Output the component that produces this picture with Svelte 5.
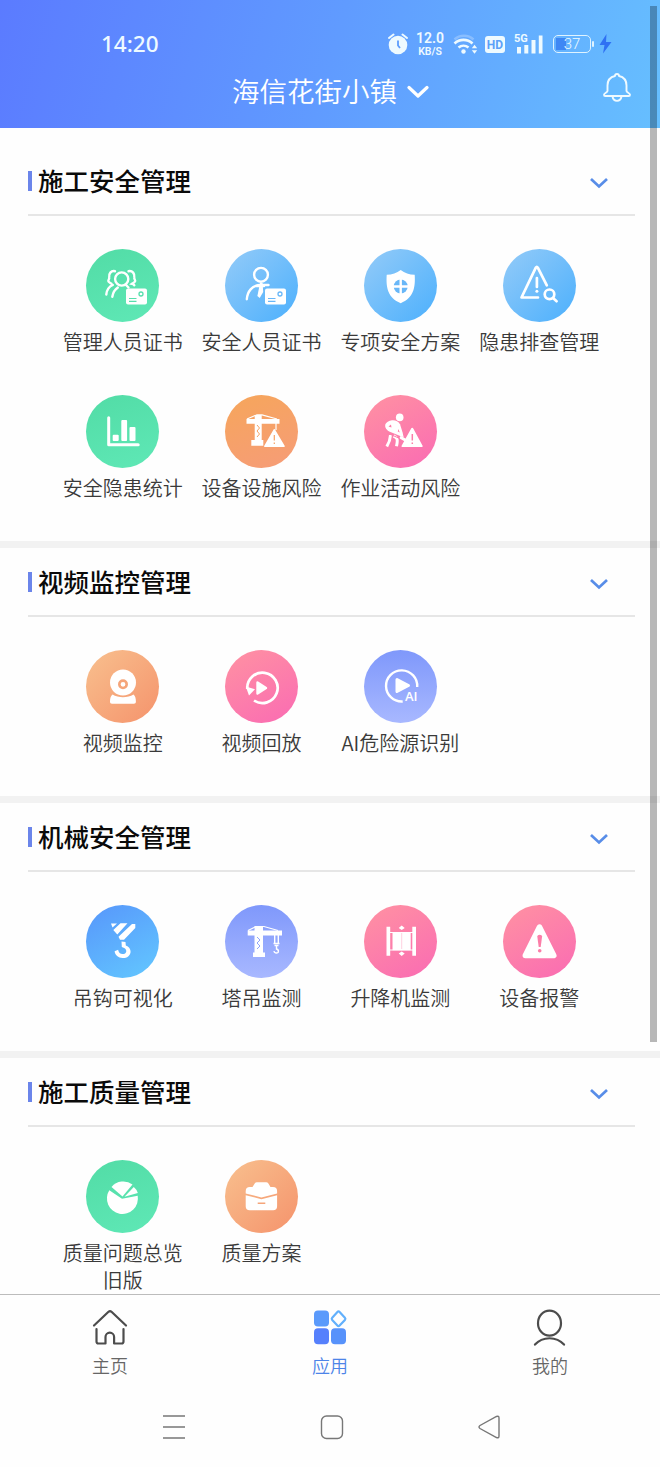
<script>
	const sections = [
		{
			title: "施工安全管理",
			items: [
				{ name: "管理人员证书", icon: "team", tint: "green" },
				{ name: "安全人员证书", icon: "person", tint: "sky" },
				{ name: "专项安全方案", icon: "shield", tint: "sky" },
				{ name: "隐患排查管理", icon: "inspect", tint: "sky" },
				{ name: "安全隐患统计", icon: "chart", tint: "green" },
				{ name: "设备设施风险", icon: "craneRisk", tint: "orange" },
				{ name: "作业活动风险", icon: "worker", tint: "pink" },
			],
		},
		{
			title: "视频监控管理",
			items: [
				{ name: "视频监控", icon: "camera", tint: "peach" },
				{ name: "视频回放", icon: "replay", tint: "pink" },
				{ name: "AI危险源识别", icon: "ai", tint: "violet" },
			],
		},
		{
			title: "机械安全管理",
			items: [
				{ name: "吊钩可视化", icon: "hook", tint: "blue" },
				{ name: "塔吊监测", icon: "crane", tint: "violet" },
				{ name: "升降机监测", icon: "lift", tint: "pink" },
				{ name: "设备报警", icon: "alarm", tint: "pink" },
			],
		},
		{
			title: "施工质量管理",
			items: [
				{ name: "质量问题总览旧版", icon: "pie", tint: "green" },
				{ name: "质量方案", icon: "briefcase", tint: "peach" },
			],
		},
	];

	let closed = $state({});
	let tab = $state("apps");
</script>

{#snippet card()}
	<rect x="40" y="39.5" width="21" height="16" rx="2" fill="#fff" />
	<path d="M43 49.5h7.5M43 52.4h7.5" stroke="currentColor" stroke-width="1.2" />
	<circle cx="55" cy="45" r="2" stroke="currentColor" stroke-width="1.3" />
{/snippet}

{#snippet glyph(icon)}
	{#if icon === "team"}
		<g stroke="#fff" stroke-width="2.4" stroke-linecap="round">
			<circle cx="35.7" cy="30" r="6.6" />
			<path d="M29 22.2c-4-.8-6.500 2.500-5.800 6.500.3 1.500-1.500 2.500-.7 3.800.7 1.200 2 1.600 3 2.300M42.500 22.200c4-.8 6.500 2.500 5.800 6.500-.3 1.500 1.500 2.500.7 3.800-.7 1.200-2 1.600-3 2.300 1 .2 1.800.8 2.300 1.500" />
			<path d="M20.300 45.500c.5-4.500 2.800-8 6.500-9.500M26.300 47.800c.6-4 2.400-7 5.500-9.200M40 36l2.500 2.500" />
		</g>
		{@render card()}
	{:else if icon === "person"}
		<g stroke="#fff" stroke-width="2.4" stroke-linecap="round">
			<circle cx="36" cy="25.8" r="6.9" />
			<path d="M21.800 50.300c.5-8 5.500-13.800 12.700-14.300h9M31 37h8" />
		</g>
		<path d="M35 34h2.600l.6 9-3.500 6-2.300-2z" fill="#fff" />
		{@render card()}
	{:else if icon === "shield"}
		<path d="M36.700 21c4 3.200 8.500 4.600 14 4.800.8 13-1 23-14 28.400-13-5.400-14.800-15.400-14-28.400 5.500-.2 10-1.600 14-4.800z" fill="#fff" />
		<circle cx="36.700" cy="37.500" r="7" fill="currentColor" />
		<path d="M36.700 30v15M29 37.500h15.400" stroke="#fff" stroke-width="2.400" />
	{:else if icon === "inspect"}
		<g stroke="#fff" stroke-width="2.700" stroke-linecap="round" stroke-linejoin="round">
			<path d="M35 48.500H18.500L32.800 18.700q1-1.700 2 0l9 17.600" />
			<path d="M33.900 29v9" />
			<circle cx="46.500" cy="45.300" r="4.800" />
			<path d="M50.300 49.200l3.300 3" />
		</g>
		<circle cx="33.900" cy="42.300" r="1.500" fill="#fff" />
	{:else if icon === "chart"}
		<path d="M22.700 22.700v27h29.500" stroke="#fff" stroke-width="3" stroke-linecap="round" stroke-linejoin="round" />
		<g fill="#fff">
			<rect x="26.700" y="39.800" width="6" height="6.200" rx="1" />
			<rect x="35.300" y="25" width="5.800" height="21" rx="1" />
			<rect x="43.500" y="32" width="6" height="14" rx="1" />
		</g>
	{:else if icon === "craneRisk"}
		<g fill="#fff">
			<path d="M21.500 24h33v4.700h-33zM29.700 20h7v25h-7zM26.300 45h12v5.800h-12z" />
			<path d="M49.300 34q.6 0 1 1L59.800 51q.4 1-1 1H40q-1.400 0-.9-1l9.200-16q.4-1 1-1z" />
		</g>
		<path d="M22 24l10-4.200h5L52 24M51 28v7" stroke="#fff" stroke-width="1.200" />
		<path d="M32 30l2.500 3-2.500 3 2.500 3-2.500 3" stroke="currentColor" stroke-width="1" />
		<path d="M49.300 40v5.500M49.300 47.500v1.500" stroke="currentColor" stroke-width="1.200" />
	{:else if icon === "worker"}
		<circle cx="35.700" cy="22.400" r="3.800" fill="#fff" />
		<path d="M28 25.300c3-.4 6.500 1 8 4l2.500 8 1.200 5-3.500-1.200-11-4.600c-2.500-1.500-4.500-3.500-4-6.500.5-2.500 4-4.300 6.800-4.700z" fill="#fff" />
		<path d="M24.500 31.500l2.500-2 .5 3zM34.300 34l1.500 3.500-2-1z" fill="currentColor" />
		<path d="M36 42l6 3.500M26.500 40c-.3 5-1.500 8-3.700 11.500M29.500 41c4 1.500 4.500 3.500 3 10.300" stroke="#fff" stroke-width="3" />
		<path d="M23 38l13 5.500" stroke="currentColor" stroke-width="1" />
		<path d="M48.200 32.700q.7 0 1.200 1l9.200 17q.6 1.300-1 1.300H38.500q-1.600 0-.9-1.300l9.400-17q.5-1 1.200-1z" fill="#fff" />
		<path d="M48.300 39v6.500M48.300 47.500v1.600" stroke="currentColor" stroke-width="1.500" />
	{:else if icon === "camera"}
		<circle cx="37" cy="32.500" r="13" fill="#fff" />
		<circle cx="37" cy="34.300" r="3.700" stroke="currentColor" stroke-width="2.600" />
		<path d="M26.500 44.500c6 3.600 15 3.600 21 0 1.700 1.200 2.400 4 2.400 7 0 1.500-.7 2.200-2 2.200H26c-1.300 0-2-.7-2-2.200 0-3 .8-5.800 2.500-7z" fill="#fff" />
	{:else if icon === "replay"}
		<path d="M22.300 39A15.200 15.200 0 1 1 29 50.500" stroke="#fff" stroke-width="2.700" />
		<path d="M20.800 36.500l9.200 2.700-6 6.300z" fill="#fff" />
		<path d="M32.500 32.500l8.500 5.500-8.500 5.500z" fill="#fff" stroke="#fff" stroke-width="2.400" stroke-linejoin="round" />
	{:else if icon === "ai"}
		<path d="M53.200 37A15.600 15.600 0 1 0 38.700 51.500" stroke="#fff" stroke-width="2.400" />
		<path d="M33 29.500l11.500 6-11.500 6z" fill="#fff" stroke="#fff" stroke-width="3" stroke-linejoin="round" />
		<text x="41" y="51.300" fill="#fff" class="ai">AI</text>
	{:else if icon === "hook"}
		<path d="M25 18.500h6l-4.500 4zM34.500 18.300h7L31.300 29.500l-4-4.500zM46 19h3.300v4L38 34.700h-4l-1.500-3z" fill="#fff" />
		<path d="M35.500 36.500l4 .5.300 3.500c3 1.200 5 3.500 4.800 6.500-.4 4-3.800 6.300-8 6.100-4.400-.2-7.500-3-8-6.800l3.500-1.500c.5 2.600 2 4.300 4.500 4.300 2.200 0 3.800-1.300 3.700-3.200 0-2-1.800-3.200-4.500-4z" fill="#fff" />
	{:else if icon === "crane"}
		<path d="M22.700 25.500H57v5H22.700zM29.500 21h8.500v27h-8.500zM28 47.500h12V52H28z" fill="#fff" />
		<path d="M23 25.500l8-4h8L53 25.500" stroke="#fff" stroke-width="1.200" />
		<path d="M32 32l3 3-3 3 3 3-3 3" stroke="currentColor" stroke-width="1" />
		<path d="M49.700 30v8M53.300 30v8M48.500 38.500h6M49.500 40.500h4M51.500 41v3c3 1 2.200 4.500-.5 4-1.500-.2-2-1-2-2" stroke="#fff" stroke-width="1.400" />
	{:else if icon === "lift"}
		<path d="M22.500 21.700h3.700v29h-3.700zM48.300 21.700H52v29h-3.700zM28.500 27H46.700v18.300H28.500zM37.700 20.500l3 2.500-3 2-3-2zM37.700 51l3-2.500-3-2-3 2z" fill="#fff" />
		<path d="M26 27.500h23M26 45h23" stroke="#fff" />
		<path d="M37.700 28v16" stroke="currentColor" stroke-width=".6" stroke-opacity=".6" />
	{:else if icon === "alarm"}
		<path d="M36.500 22L50.800 50.500H22.300z" fill="#fff" stroke="#fff" stroke-width="5.500" stroke-linejoin="round" />
		<path d="M34.300 31.500q0-1.800 2.400-1.800t2.400 1.800L37.700 42h-2z" fill="currentColor" />
		<circle cx="36.700" cy="45.700" r="1.800" fill="currentColor" />
	{:else if icon === "pie"}
		<path d="M36 38.800L23.300 30.300A15.500 15.500 0 1 0 51.700 35.800z" fill="#fff" />
		<path d="M36.500 36.600L25.500 27A15.400 15.400 0 0 1 46.500 24.500z" fill="#fff" />
		<path d="M38.500 36.800l9.300-9.800q3 2.500 4 6z" fill="#fff" />
	{:else if icon === "briefcase"}
		<path d="M20.700 33.400v-2.200q0-4.200 4.200-4.200h2.600l2.200-3.500q.8-1.200 2.200-1.200h9.300q1.400 0 2.200 1.200l2.100 3.500h2.400q4.200 0 4.200 4.200v2.200l-15.700 4z" fill="#fff" />
		<path d="M20.700 35.200l15.700 4 15.700-4v11q0 4-4 4H24.700q-4 0-4-4z" fill="#fff" />
		<path d="M32.700 43.200h7.600" stroke="currentColor" stroke-width="1.500" />
	{/if}
{/snippet}

<div class="screen">
	<header>
		<div class="status">
			<span class="time">14:20</span>
			<svg class="clock" width="20" height="22" viewBox="0 0 20 22" fill="none">
				<circle cx="10" cy="12" r="9.300" fill="#eefaff" />
				<path d="M1 5l4.500-3.500M19 5l-4.500-3.500" stroke="#eefaff" stroke-width="2" stroke-linecap="round" />
				<path d="M10 7.500v5l2 2.500" stroke="#5d9dfd" stroke-width="1.800" />
			</svg>
			<div class="speed"><b>12.0</b><span>KB/S</span></div>
			<svg class="wifi" width="26" height="22" viewBox="0 0 26 22" fill="none">
				<path d="M1.500 6.500a14 14 0 0 1 19 0" stroke="#fff" stroke-opacity=".25" stroke-width="2.500" />
				<path d="M1.500 10.500a13 13 0 0 1 18 0M5.500 14.500a8 8 0 0 1 10 0" stroke="#eefaff" stroke-width="2.600" />
				<circle cx="10.500" cy="18.500" r="2.200" fill="#eefaff" />
				<path d="M18.800 15.300l2.700-3.500 2.700 3.500zM18.800 17.200l2.700 3.500 2.700-3.500z" fill="#eefaff" />
			</svg>
			<span class="hd">HD</span>
			<div class="signal">
				<span>5G</span>
				<svg width="29" height="20" viewBox="0 0 29 20" fill="#eefaff">
					<path d="M3 13h4v6.500H3zM10.300 11h4v8.500h-4zM17.500 6h4v13.500h-4zM24.800 1.500h3.700v18h-3.700z" />
				</svg>
			</div>
			<div class="battery"><span>37</span></div>
			<svg class="bolt" width="13" height="20" viewBox="0 0 13 20">
				<path d="M7.500 0L.5 11h5L4 19.500 12.500 8H7z" fill="#2f70f3" />
			</svg>
		</div>
		<div class="project">
			<h1>海信花街小镇</h1>
			<svg class="arrow" width="22" height="14" viewBox="0 0 22 14" fill="none">
				<path d="M2 2.500l9 8.500 9-8.500" stroke="#fff" stroke-width="3.200" stroke-linecap="round" stroke-linejoin="round" />
			</svg>
			<svg class="bell" width="30" height="32" viewBox="0 0 30 32" fill="none" stroke="#effaff" stroke-width="1.900" stroke-linejoin="round">
				<path d="M13 4a2 2 0 0 1 4 0c4.500 1 7.500 4.500 7.500 9.500V19c0 1.500 3.500 2 3.500 3.700 0 .8-.5 1.300-1.300 1.300H3.300C2.500 24 2 23.500 2 22.700 2 21 5.500 20.500 5.500 19v-5.500C5.500 8.500 8.500 5 13 4z" />
				<path d="M10.500 24.500a4.600 5.500 0 0 0 9 0" />
			</svg>
		</div>
	</header>

	<main>
		{#each sections as section}
			<section>
				<button class="heading" onclick={() => (closed[section.title] = !closed[section.title])}>
					<i></i>
					<h2>{section.title}</h2>
					<svg width="20" height="12" viewBox="0 0 20 12" fill="none">
						<path d="M2 2l8 7.500L18 2" stroke="#588de8" stroke-width="2.700" />
					</svg>
				</button>
				{#if !closed[section.title]}
					<div class="grid">
						{#each section.items as item}
							<div class="item">
								<svg class="icon {item.tint}" viewBox="0 0 73 73" fill="none">
									{@render glyph(item.icon)}
								</svg>
								<p>{item.name}</p>
							</div>
						{/each}
					</div>
				{/if}
			</section>
		{/each}
	</main>

	<nav class="tabs">
		<button class:active={tab === "home"} onclick={() => (tab = "home")}>
			<svg width="36" height="37" viewBox="0 0 36 37" fill="none" stroke="#4c4c4c" stroke-width="2.200" stroke-linecap="round" stroke-linejoin="round">
				<path d="M2 16.500L16.500 2.800q1.500-1.300 3 0L34 16.500M4.500 20v12.500q0 2 2 2h7V28a4.300 4.300 0 0 1 8.600 0v6.500h7.400q2 0 2-2V20" />
			</svg>
			<span>主页</span>
		</button>
		<button class:active={tab === "apps"} onclick={() => (tab = "apps")}>
			<svg width="36" height="37" viewBox="0 0 36 37" fill="none">
				<rect x="2" y="1.500" width="15" height="16" rx="4" fill="#5b9afb" />
				<rect x="2" y="19.300" width="15" height="16" rx="4" fill="#5680fc" />
				<rect x="19" y="19.300" width="15" height="16" rx="4" fill="#5792fb" />
				<path d="M25.400 3q1.100-1.200 2.200 0l5.300 5.700q1 1.100 0 2.200l-5.300 5.600q-1.100 1.200-2.200 0l-5.200-5.600q-1-1.100 0-2.200z" stroke="#62b0fc" stroke-width="2.200" />
			</svg>
			<span>应用</span>
		</button>
		<button class:active={tab === "me"} onclick={() => (tab = "me")}>
			<svg width="36" height="37" viewBox="0 0 36 37" fill="none" stroke="#4c4c4c" stroke-width="2.200" stroke-linecap="round">
				<ellipse cx="17.500" cy="14.200" rx="11.500" ry="12.500" />
				<path d="M3 35.600c7.500-8.500 21.500-8.500 29 0" />
			</svg>
			<span>我的</span>
		</button>
	</nav>

	<div class="system">
		<svg width="26" height="26" viewBox="0 0 26 26"><path d="M2 2h22M2 13h22M2 24h22" /></svg>
		<svg width="26" height="26" viewBox="0 0 26 26"><rect x="2.500" y="2" width="21" height="22.500" rx="5" /></svg>
		<svg width="26" height="26" viewBox="0 0 26 26"><path d="M20.500 2.500Q23 1.500 23 4v18q0 2.500-2.500 1.500L4 14.500q-2-1.500 0-3z" /></svg>
	</div>

	<div class="scrollbar"></div>
</div>

<style>
	:global(body) {
		margin: 0;
	}
	.screen {
		position: relative;
		width: 660px;
		height: 1467px;
		display: flex;
		flex-direction: column;
		overflow: hidden;
		background: #fefefe;
		font-family: "Noto Sans CJK SC", sans-serif;
		font-weight: 350;
		color: #3a3a3a;
	}
	h1,
	h2,
	p {
		margin: 0;
		font-weight: 350;
	}
	button {
		padding: 0;
		border: 0;
		background: none;
		font: inherit;
		color: inherit;
	}
	svg {
		display: block;
		flex: none;
	}
	header {
		flex: none;
		height: 128px;
		box-sizing: border-box;
		padding-top: 30px;
		background: linear-gradient(105deg, #5b7bff 0%, #609bff 50%, #66bfff 100%);
		color: #fff;
	}
	.status {
		display: flex;
		align-items: center;
		height: 28px;
		padding-left: 101px;
		color: #eefaff;
		font-family: Roboto, sans-serif;
	}
	.time {
		width: 287px;
		font: 500 22.500px/28px "Noto Sans", sans-serif;
	}
	.speed {
		display: flex;
		flex-direction: column;
		justify-content: space-between;
		width: 30px;
		height: 25px;
		margin: 0 8px 0 7px;
		text-align: center;
		line-height: 11px;
		font-size: 10.500px;
		font-weight: 600;
	}
	.speed b {
		font-size: 14px;
		font-weight: 600;
		line-height: 13px;
	}
	.hd {
		width: 20px;
		height: 17px;
		margin: 0 9px 0 6px;
		border-radius: 3px;
		background: #eefaff;
		color: #5ca0f8;
		font: 700 12px/18px Roboto, sans-serif;
		text-align: center;
	}
	.signal {
		position: relative;
		width: 29px;
	}
	.signal span {
		position: absolute;
		left: 0;
		top: -1px;
		font-size: 11px;
		font-weight: 700;
		line-height: 11px;
	}
	.battery {
		box-sizing: border-box;
		position: relative;
		width: 38px;
		height: 18px;
		margin: 0 8px 0 10px;
		border: 1.500px solid #dff3ff;
		border-radius: 5px;
		background: linear-gradient(90deg, #3f87f4 10px, transparent 10px) 2px 2px / 30px 12px no-repeat;
		font-size: 15px;
		line-height: 16px;
		text-align: center;
	}
	.battery::after {
		content: "";
		position: absolute;
		right: -4px;
		top: 5px;
		width: 2px;
		height: 6px;
		border-radius: 1px;
		background: #dff3ff;
	}
	.project {
		display: flex;
		align-items: center;
		height: 64px;
		padding: 0 28px 0 232px;
	}
	.project h1 {
		width: 175px;
		font-size: 27.500px;
		line-height: 40px;
	}
	.arrow {
		margin-top: 4px;
	}
	.bell {
		margin-left: auto;
		margin-bottom: 4px;
	}
	main {
		height: 1166px;
		flex: none;
		overflow: hidden;
		padding-top: 19px;
		box-sizing: border-box;
	}
	section {
		box-sizing: border-box;
		border-bottom: 7px solid #f2f2f2;
	}
	.heading {
		display: flex;
		align-items: center;
		width: 607px;
		height: 69px;
		margin-left: 28px;
		padding-right: 26px;
		box-sizing: border-box;
		border-bottom: 2px solid #e6e6e6;
		text-align: left;
	}
	.heading i {
		width: 4px;
		height: 20px;
		margin-right: 6px;
		background: #6b85ea;
	}
	.heading h2 {
		flex: 1;
		margin-bottom: 2px;
		font-size: 25.500px;
		font-weight: 500;
		line-height: 36px;
		color: #0a0a0a;
	}
	.heading svg {
		margin-top: 4px;
	}
	.grid {
		display: grid;
		grid-template-columns: repeat(4, 138.800px);
		row-gap: 40px;
		padding: 33px 0 40px 53.400px;
	}
	.item {
		display: flex;
		flex-direction: column;
		align-items: center;
		gap: 6px;
	}
	.item p {
		width: 124px;
		font-size: 20px;
		line-height: 27px;
		text-align: center;
	}
	.icon {
		width: 73px;
		height: 73px;
		border-radius: 50%;
	}
	.green {
		color: #56dfac;
		background: linear-gradient(160deg, #52dca6, #5fe8b6);
	}
	.sky {
		color: #68b7f8;
		background: linear-gradient(135deg, #94cbf8, #4cb0fd);
	}
	.orange {
		color: #f5a264;
		background: linear-gradient(160deg, #f6a65b, #f69c78);
	}
	.peach {
		color: #f5a57a;
		background: linear-gradient(135deg, #f8c08e, #f5936c);
	}
	.pink {
		color: #fc7da8;
		background: linear-gradient(150deg, #ff92a2, #fa6bb3);
	}
	.violet {
		color: #8fa4fb;
		background: linear-gradient(180deg, #7f98fb, #a8b8ff);
	}
	.blue {
		color: #5fb0fd;
		background: linear-gradient(150deg, #5796fb, #63c8ff);
	}
	.ai {
		font: 600 13px "Open Sans", sans-serif;
	}
	.tabs {
		display: flex;
		flex: none;
		height: 92px;
		border-top: 1px solid #bcbcbc;
		background: #fefefe;
	}
	.tabs button {
		flex: 1;
		display: flex;
		flex-direction: column;
		align-items: center;
		padding-top: 14px;
		font-size: 18px;
		line-height: 26px;
		color: #666;
	}
	.tabs span {
		margin-top: 6px;
	}
	.tabs .active {
		color: #4d84e8;
	}
	.system {
		display: flex;
		justify-content: space-between;
		padding: 27px 158px 0 161px;
	}
	.system svg {
		fill: none;
		stroke: #777;
		stroke-width: 1.400;
	}
	.scrollbar {
		position: absolute;
		top: 6px;
		left: 650px;
		width: 7px;
		height: 1036px;
		background: rgba(0, 0, 0, 0.280);
	}
</style>
